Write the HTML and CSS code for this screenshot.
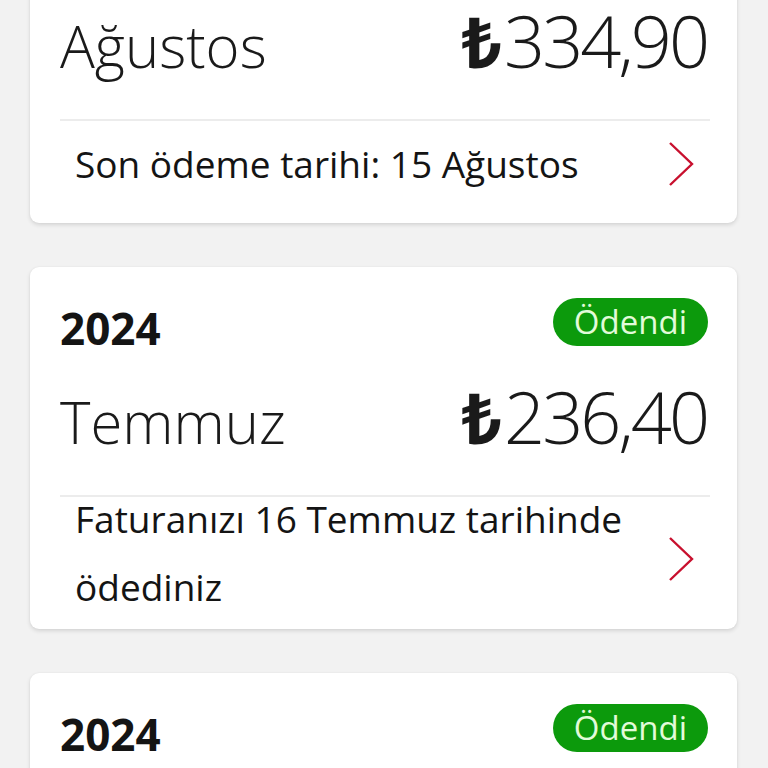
FILE: index.html
```html
<!DOCTYPE html>
<html lang="tr">
<head>
<meta charset="utf-8">
<title>Faturalar</title>
<link rel="stylesheet" href="styles.css">
</head>
<body>
<main class="bill-list">
  <section class="bill-card">
    <div class="bill-head">
      <span class="bill-year">2024</span>
    </div>
    <div class="bill-main">
      <span class="bill-month">Ağustos</span>
      <span class="bill-amount"><span class="currency">₺</span>334,90</span>
    </div>
    <a class="bill-note-row bill-note-row--single" href="#">
      <span class="bill-note">Son ödeme tarihi: 15 Ağustos</span>
      <svg class="chevron" viewBox="0 0 26 46" width="26" height="46" aria-hidden="true"><path d="M2 2 L24 23 L2 44" fill="none" stroke="#c8102e" stroke-width="2.4"/></svg>
    </a>
  </section>

  <section class="bill-card">
    <div class="bill-head">
      <span class="bill-year">2024</span>
      <span class="badge-paid">Ödendi</span>
    </div>
    <div class="bill-main">
      <span class="bill-month">Temmuz</span>
      <span class="bill-amount"><span class="currency">₺</span>236,40</span>
    </div>
    <a class="bill-note-row bill-note-row--wrap" href="#">
      <span class="bill-note">Faturanızı 16 Temmuz tarihinde ödediniz</span>
      <svg class="chevron" viewBox="0 0 26 46" width="26" height="46" aria-hidden="true"><path d="M2 2 L24 23 L2 44" fill="none" stroke="#c8102e" stroke-width="2.4"/></svg>
    </a>
  </section>

  <section class="bill-card bill-card--partial">
    <div class="bill-head">
      <span class="bill-year">2024</span>
      <span class="badge-paid">Ödendi</span>
    </div>
  </section>
</main>
</body>
</html>
```

FILE: styles.css
```css
html, body {
  margin: 0;
  padding: 0;
  background: #f2f2f2;
  overflow: hidden;
  height: 768px;
}

body {
  font-family: "Open Sans", "Noto Sans", "DejaVu Sans", sans-serif;
  color: #141414;
}

.bill-list {
  display: flex;
  flex-direction: column;
  gap: 44px;
  padding: 0 31px 0 30px;
  margin-top: -109px;
}

.bill-card {
  background: #ffffff;
  border-radius: 9px;
  box-shadow: 0 2px 4px rgba(0, 0, 0, 0.12), 0 0 2px rgba(0, 0, 0, 0.05);
  padding: 31px 27px 0 30px;
  display: flex;
  flex-direction: column;
}

.bill-card--partial {
  padding-bottom: 80px;
}

.bill-head {
  display: flex;
  justify-content: space-between;
  align-items: flex-end;
  min-height: 48px;
}

.bill-year {
  font-size: 44px;
  line-height: 44px;
  font-weight: 700;
  margin-bottom: -4px;
}

.badge-paid {
  background: #0c9a0c;
  color: #e2fbd9;
  border-radius: 24px;
  height: 48px;
  box-sizing: border-box;
  padding: 0 21px;
  font-size: 33px;
  line-height: 46px;
  font-weight: 400;
  display: flex;
  align-items: center;
  margin-right: 2px;
}

.bill-main {
  display: flex;
  justify-content: space-between;
  align-items: baseline;
  margin-top: 34px;
  padding-bottom: 37px;
}

.bill-month {
  font-size: 58px;
  line-height: 72px;
  font-weight: 300;
  color: #1a1a1a;
}

.bill-amount {
  font-size: 72px;
  line-height: 72px;
  font-weight: 300;
  letter-spacing: -3px;
  color: #1a1a1a;
  margin-right: 3px;
}

.currency {
  font-family: "Noto Sans", "DejaVu Sans", sans-serif;
  font-weight: 700;
  font-size: 70px;
  letter-spacing: 0;
  margin-right: 2px;
}

.bill-note-row {
  display: flex;
  align-items: center;
  justify-content: space-between;
  border-top: 2px solid #ececec;
  color: #141414;
  text-decoration: none;
  padding-left: 15px;
}

.bill-note-row--single {
  padding-top: 9px;
  padding-bottom: 25px;
}

.bill-note-row--wrap {
  padding-top: 0;
  padding-bottom: 8px;
}

.bill-note-row--wrap .bill-note {
  margin-top: -12px;
}

.bill-note {
  flex: 1;
  max-width: 575px;
  font-size: 37px;
  line-height: 68px;
  font-weight: 400;
}

.chevron {
  flex: none;
  margin-right: 16px;
}
```
